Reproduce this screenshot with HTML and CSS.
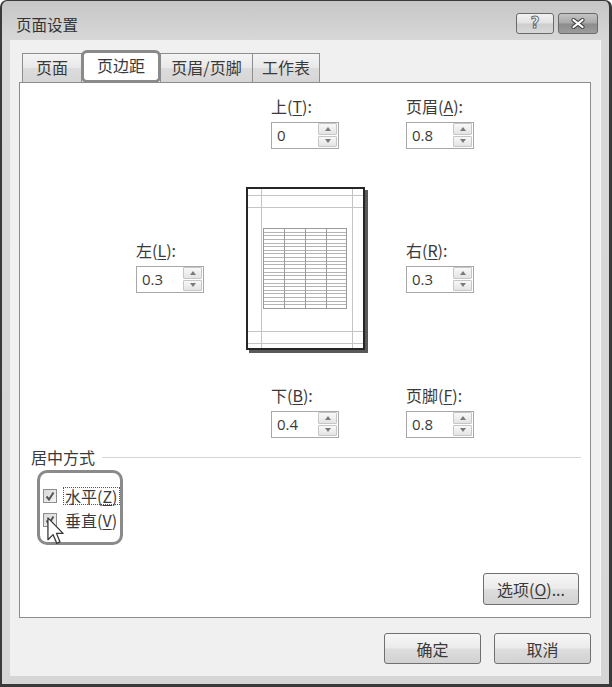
FILE: index.html
```html
<!DOCTYPE html>
<html lang="zh-CN">
<head>
<meta charset="utf-8">
<title>页面设置</title>
<link rel="stylesheet" href="styles.css">
</head>
<body>
<div class="window">
  <div class="titlebar">
    <span class="title">页面设置</span>
    <div class="caption-btns">
      <div class="cap help"><span class="q">?</span></div>
      <div class="cap close">
        <svg width="14" height="11" viewBox="0 0 14 11"><path d="M2.5 2 L11.5 9 M11.5 2 L2.5 9" stroke="#4a4a4a" stroke-width="4.2" stroke-linecap="round"/><path d="M2.5 2 L11.5 9 M11.5 2 L2.5 9" stroke="#ffffff" stroke-width="2.2" stroke-linecap="round"/></svg>
      </div>
    </div>
  </div>
  <div class="client">
    <div class="tabs">
      <div class="tab t1">页面</div>
      <div class="tab active">页边距</div>
      <div class="tab t3">页眉/页脚</div>
      <div class="tab t4">工作表</div>
    </div>
    <div class="panel">
      <div class="row row-top">
        <div class="field">
          <div class="lbl">上(<u>T</u>):</div>
          <div class="spin"><span class="val">0</span><span class="arrows"><span class="ab up"><i></i></span><span class="ab down"><i></i></span></span></div>
        </div>
        <div class="field">
          <div class="lbl">页眉(<u>A</u>):</div>
          <div class="spin"><span class="val">0.8</span><span class="arrows"><span class="ab up"><i></i></span><span class="ab down"><i></i></span></span></div>
        </div>
      </div>
      <div class="row row-mid">
        <div class="field side">
          <div class="lbl">左(<u>L</u>):</div>
          <div class="spin"><span class="val">0.3</span><span class="arrows"><span class="ab up"><i></i></span><span class="ab down"><i></i></span></span></div>
        </div>
        <div class="preview">
          <svg width="122" height="166" viewBox="0 0 122 166">
            <rect x="3" y="3" width="119" height="163" fill="#5a5a5a"/>
            <rect x="1" y="1" width="117" height="161" fill="#ffffff" stroke="#262626" stroke-width="2"/>
            <g stroke="#c4c4c4" stroke-width="1">
              <line x1="2" y1="8.5" x2="117" y2="8.5"/>
              <line x1="2" y1="20.5" x2="117" y2="20.5"/>
              <line x1="2" y1="144.5" x2="117" y2="144.5"/>
              <line x1="2" y1="156.5" x2="117" y2="156.5"/>
              <line x1="15.5" y1="2" x2="15.5" y2="161"/>
              <line x1="106.5" y1="2" x2="106.5" y2="161"/>
            </g>
            <g stroke="#b4b4b4" stroke-width="1">
              <line x1="17" y1="45.5" x2="101" y2="45.5"/>
              <line x1="17" y1="48.5" x2="101" y2="48.5"/>
              <line x1="17" y1="52.5" x2="101" y2="52.5"/>
              <line x1="17" y1="56.5" x2="101" y2="56.5"/>
              <line x1="17" y1="59.5" x2="101" y2="59.5"/>
              <line x1="17" y1="63.5" x2="101" y2="63.5"/>
              <line x1="17" y1="66.5" x2="101" y2="66.5"/>
              <line x1="17" y1="70.5" x2="101" y2="70.5"/>
              <line x1="17" y1="74.5" x2="101" y2="74.5"/>
              <line x1="17" y1="77.5" x2="101" y2="77.5"/>
              <line x1="17" y1="81.5" x2="101" y2="81.5"/>
              <line x1="17" y1="85.5" x2="101" y2="85.5"/>
              <line x1="17" y1="88.5" x2="101" y2="88.5"/>
              <line x1="17" y1="92.5" x2="101" y2="92.5"/>
              <line x1="17" y1="96.5" x2="101" y2="96.5"/>
              <line x1="17" y1="99.5" x2="101" y2="99.5"/>
              <line x1="17" y1="103.5" x2="101" y2="103.5"/>
              <line x1="17" y1="106.5" x2="101" y2="106.5"/>
              <line x1="17" y1="110.5" x2="101" y2="110.5"/>
              <line x1="17" y1="114.5" x2="101" y2="114.5"/>
              <line x1="17" y1="117.5" x2="101" y2="117.5"/>
            </g>
            <g stroke="#9a9a9a" stroke-width="1" fill="none">
              <rect x="17.5" y="41.5" width="83" height="80"/>
              <line x1="38.5" y1="41" x2="38.5" y2="122"/>
              <line x1="59.5" y1="41" x2="59.5" y2="122"/>
              <line x1="80.5" y1="41" x2="80.5" y2="122"/>
            </g>
          </svg>
        </div>
        <div class="field side right">
          <div class="lbl">右(<u>R</u>):</div>
          <div class="spin"><span class="val">0.3</span><span class="arrows"><span class="ab up"><i></i></span><span class="ab down"><i></i></span></span></div>
        </div>
      </div>
      <div class="row row-bot">
        <div class="field">
          <div class="lbl">下(<u>B</u>):</div>
          <div class="spin"><span class="val">0.4</span><span class="arrows"><span class="ab up"><i></i></span><span class="ab down"><i></i></span></span></div>
        </div>
        <div class="field">
          <div class="lbl">页脚(<u>F</u>):</div>
          <div class="spin"><span class="val">0.8</span><span class="arrows"><span class="ab up"><i></i></span><span class="ab down"><i></i></span></span></div>
        </div>
      </div>
      <div class="section">
        <span class="legend">居中方式</span><span class="rule"></span>
      </div>
      <div class="center-group">
        <div class="check">
          <span class="box"><svg width="12" height="12" viewBox="0 0 12 12"><path d="M2.5 6.5 L5 9.5 L9.5 2.5" fill="none" stroke="#555" stroke-width="2"/></svg></span>
          <span class="ctext focus">水平(<u>Z</u>)</span>
        </div>
        <div class="check">
          <span class="box"><svg width="12" height="12" viewBox="0 0 12 12"><path d="M2.5 6.5 L5 9.5 L9.5 2.5" fill="none" stroke="#555" stroke-width="2"/></svg></span>
          <span class="ctext">垂直(<u>V</u>)</span>
        </div>
        <svg class="cursor" width="17" height="28" viewBox="0 0 12 20"><path d="M0.6 0.6 L0.6 16.2 L4.3 12.6 L6.9 18.8 L9.2 17.8 L6.7 11.7 L11.4 11.7 Z" fill="#ffffff" stroke="#333" stroke-width="0.9" stroke-linejoin="round"/></svg>
      </div>
      <div class="options-row">
        <div class="btn options">选项(<u>O</u>)...</div>
      </div>
    </div>
    <div class="footer">
      <div class="btn">确定</div>
      <div class="btn">取消</div>
    </div>
  </div>
</div>
</body>
</html>
```
FILE: styles.css
```css
* { box-sizing: border-box; }

body {
  margin: 0;
  background: #ffffff;
  font-family: "Noto Sans CJK SC", "Noto Sans", sans-serif;
  font-size: 16px;
  color: #3a3a3a;
}

u { text-decoration: underline; text-underline-offset: 2px; }

.window {
  width: 612px;
  height: 687px;
  border-style: solid;
  border-color: #3a3a3a;
  border-width: 1px 3px 3px 2px;
  border-radius: 7px 7px 0 0;
  background: linear-gradient(#c6c6c6, #d8d8d8 40px, #d6d6d6);
  display: flex;
  flex-direction: column;
  padding: 0 8px 8px 8px;
}

.titlebar {
  height: 39px;
  display: flex;
  justify-content: space-between;
  align-items: flex-start;
  padding: 0 3px 0 6px;
}

.title {
  margin-top: 13px;
  line-height: 20px;
  font-size: 15.5px;
  color: #333333;
}

.caption-btns {
  margin-top: 12px;
  display: flex;
  gap: 4px;
}

.cap {
  height: 21px;
  border: 1px solid #6a6a6a;
  border-radius: 3px;
  display: flex;
  align-items: center;
  justify-content: center;
}

.help {
  width: 38px;
  background: linear-gradient(#f2f2f2, #e2e2e2 48%, #cdcdcd 52%, #d8d8d8);
}

.q {
  font-family: "DejaVu Sans", sans-serif;
  font-weight: bold;
  font-size: 15px;
  line-height: 15px;
  color: #ffffff;
  -webkit-text-stroke: 1px #6a6a6a;
}

.close {
  width: 40px;
  background: linear-gradient(#c4c4c4, #a8a8a8 48%, #8c8c8c 52%, #9c9c9c);
}

.client {
  flex: 1;
  background: #f0f0f0;
  padding: 10px 9px 0 9px;
  display: flex;
  flex-direction: column;
  border-right: 1px solid #f8f8f8;
}

.tabs {
  height: 32px;
  display: flex;
  align-items: flex-end;
  padding-left: 3px;
}

.tab {
  height: 29px;
  border: 1px solid #8e8e8e;
  border-bottom: none;
  background: linear-gradient(#f4f4f4, #e8e8e8 50%, #dcdcdc 51%, #d6d6d6);
  display: flex;
  align-items: center;
  justify-content: center;
  padding-bottom: 2px;
  line-height: 18px;
}

.t1 { width: 60px; }
.t3 { width: 93px; margin-left: -1px; }
.t4 { width: 68px; margin-left: -1px; }

.tab.active {
  width: 80px;
  height: 33px;
  margin-left: -1px;
  margin-bottom: -1px;
  border: 3px solid #8a8a8a;
  border-radius: 6px;
  background: #ffffff;
  position: relative;
  z-index: 2;
  padding-bottom: 3px;
}

.panel {
  height: 536px;
  border: 1px solid #8c8c8c;
  background: #ffffff;
  display: flex;
  flex-direction: column;
}

.row { display: flex; align-items: flex-start; }

.row-top { margin-top: 14px; padding-left: 251px; gap: 67px; }
.row-mid { margin-top: 38px; padding-left: 116px; }
.row-bot { margin-top: 33px; padding-left: 251px; gap: 67px; }

.field { width: 68px; display: flex; flex-direction: column; }
.field.side { margin-top: 54px; }
.preview { margin-left: 42px; width: 122px; height: 166px; }
.preview svg { display: block; }
.field.right { margin-left: 38px; }

.lbl {
  line-height: 18px;
  white-space: nowrap;
}

.spin {
  margin-top: 7px;
  width: 68px;
  height: 27px;
  border: 1px solid #a8a8a8;
  background: #fff;
  display: flex;
  align-items: stretch;
}

.val {
  flex: 1;
  padding-left: 5px;
  font-family: "Open Sans", "Noto Sans", sans-serif;
  font-size: 15px;
  line-height: 25px;
  color: #3a3a3a;
}

.arrows {
  width: 19px;
  margin: 0 1px 1px 0;
  display: flex;
  flex-direction: column;
  gap: 1px;
}

.ab {
  flex: 1;
  border: 1px solid #c6c6c6;
  border-radius: 1px;
  background: linear-gradient(#f8f8f8, #e4e4e4);
  display: flex;
  align-items: center;
  justify-content: center;
}

.ab i {
  width: 0;
  height: 0;
  border-left: 3.5px solid transparent;
  border-right: 3.5px solid transparent;
}
.up i { border-bottom: 4px solid #7a7a7a; }
.down i { border-top: 4px solid #7a7a7a; }

.section {
  margin-top: 10px;
  padding-left: 11px;
  padding-right: 9px;
  display: flex;
  align-items: center;
  height: 18px;
}

.legend { line-height: 18px; }

.rule {
  flex: 1;
  height: 1px;
  background: #d5d5d5;
  margin-left: 7px;
}

.center-group {
  position: relative;
  margin: 4px 0 0 17px;
  width: 86px;
  height: 75px;
  border: 3px solid #8a8a8a;
  border-radius: 10px;
  padding: 14px 0 0 3px;
  display: flex;
  flex-direction: column;
  gap: 6px;
}

.check {
  height: 18px;
  display: flex;
  align-items: center;
}

.box {
  width: 14px;
  height: 14px;
  border: 1px solid #8e8e8e;
  background: linear-gradient(135deg, #d8d8d8, #f4f4f4);
  display: flex;
  align-items: center;
  justify-content: center;
}
.box svg { display: block; }

.ctext {
  margin-left: 6px;
  line-height: 16px;
  white-space: nowrap;
  padding: 0 1px;
  border: 1px solid transparent;
}

.ctext.focus { border: 1px dotted #555; }

.cursor {
  position: absolute;
  left: 7px;
  top: 44px;
}

.options-row {
  margin-top: auto;
  margin-bottom: 12px;
  padding-right: 11px;
  display: flex;
  justify-content: flex-end;
}

.btn {
  height: 31px;
  width: 97px;
  border: 1px solid #707070;
  border-radius: 3px;
  background: linear-gradient(#f6f6f6, #ebebeb 48%, #dddddd 52%, #d2d2d2);
  display: flex;
  align-items: center;
  justify-content: center;
  line-height: 18px;
  white-space: nowrap;
}

.btn.options { width: 96px; height: 32px; }

.footer {
  margin-top: 15px;
  display: flex;
  justify-content: flex-end;
  gap: 13px;
}
```
